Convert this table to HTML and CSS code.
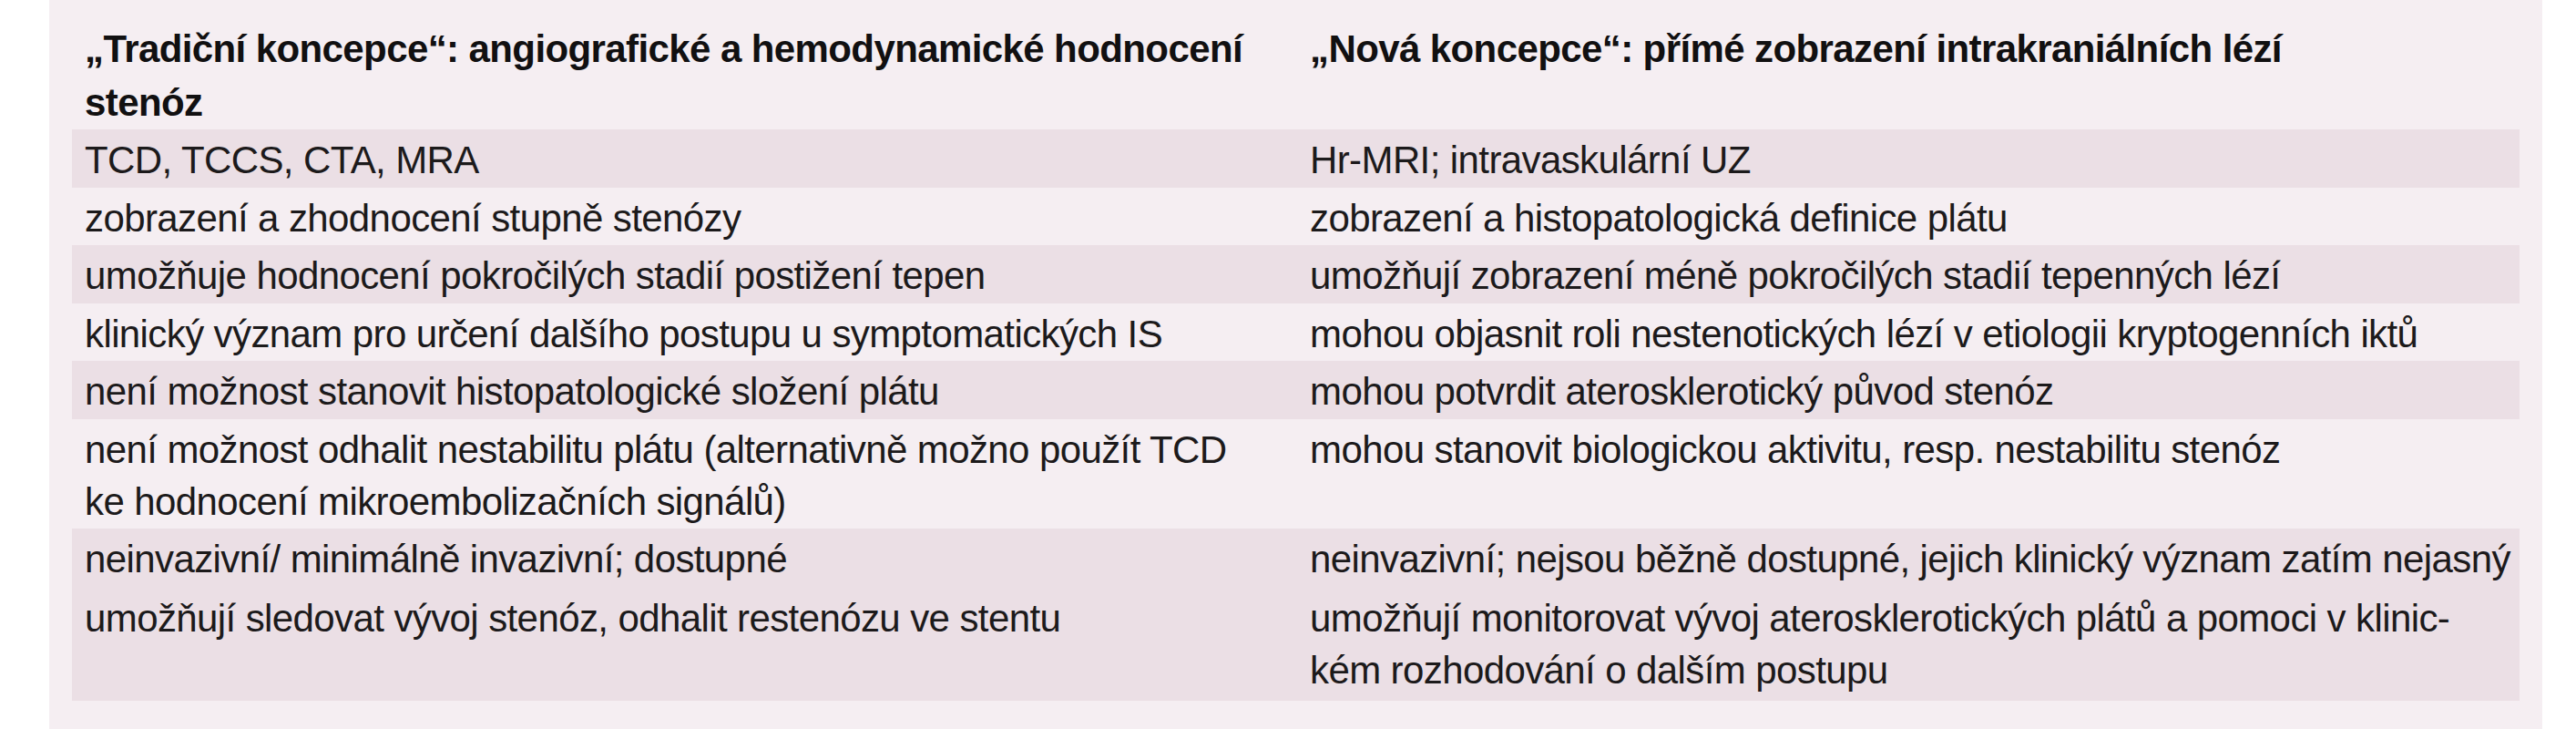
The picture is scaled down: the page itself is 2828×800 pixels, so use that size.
FILE: index.html
```html
<!DOCTYPE html>
<html lang="cs">
<head>
<meta charset="utf-8">
<title>Koncepce hodnocení stenóz</title>
<link rel="stylesheet" href="styles.css">
</head>
<body>
<div class="panel">
  <div class="tbl">
    <div class="row head">
      <div class="cell">„Tradiční koncepce“: angiografické a hemodynamické hodnocení<br>stenóz</div>
      <div class="cell">„Nová koncepce“: přímé zobrazení intrakraniálních lézí</div>
    </div>
    <div class="row shade">
      <div class="cell">TCD, TCCS, CTA, MRA</div>
      <div class="cell">Hr-MRI; intravaskulární UZ</div>
    </div>
    <div class="row">
      <div class="cell">zobrazení a zhodnocení stupně stenózy</div>
      <div class="cell">zobrazení a histopatologická definice plátu</div>
    </div>
    <div class="row shade">
      <div class="cell">umožňuje hodnocení pokročilých stadií postižení tepen</div>
      <div class="cell">umožňují zobrazení méně pokročilých stadií tepenných lézí</div>
    </div>
    <div class="row">
      <div class="cell">klinický význam pro určení dalšího postupu u symptomatických IS</div>
      <div class="cell">mohou objasnit roli nestenotických lézí v etiologii kryptogenních iktů</div>
    </div>
    <div class="row shade">
      <div class="cell">není možnost stanovit histopatologické složení plátu</div>
      <div class="cell">mohou potvrdit aterosklerotický původ stenóz</div>
    </div>
    <div class="row">
      <div class="cell">není možnost odhalit nestabilitu plátu (alternativně možno použít TCD<br>ke hodnocení mikroembolizačních signálů)</div>
      <div class="cell">mohou stanovit biologickou aktivitu, resp. nestabilitu stenóz</div>
    </div>
    <div class="row shade">
      <div class="cell">neinvazivní/ minimálně invazivní; dostupné</div>
      <div class="cell">neinvazivní; nejsou běžně dostupné, jejich klinický význam zatím nejasný</div>
    </div>
    <div class="row shade last">
      <div class="cell">umožňují sledovat vývoj stenóz, odhalit restenózu ve stentu</div>
      <div class="cell">umožňují monitorovat vývoj aterosklerotických plátů a pomoci v klinic-<br>kém rozhodování o dalším postupu</div>
    </div>
  </div>
</div>
</body>
</html>
```

FILE: styles.css
```css
html, body {
  margin: 0;
  padding: 0;
  background: #ffffff;
}

body {
  font-family: "Liberation Sans", Arial, sans-serif;
  font-size: 42px;
  letter-spacing: -0.6px;
  color: #1c1a1b;
}

.panel {
  margin-left: 54px;
  width: 2737px;
  min-height: 800px;
  box-sizing: border-box;
  padding: 24px 25px 0;
  background: #f5eef2;
}

.row {
  display: grid;
  grid-template-columns: 1345px 1342px;
}

.cell {
  min-width: 0;
  padding: 5px 14px 1.5px;
  line-height: 57px;
  white-space: nowrap;
}

.head .cell {
  padding: 0 14px;
  line-height: 59px;
  font-weight: 700;
  color: #111011;
}

.shade {
  background: #ebdfe5;
}

.last .cell {
  padding-top: 6px;
  padding-bottom: 5px;
}
```
